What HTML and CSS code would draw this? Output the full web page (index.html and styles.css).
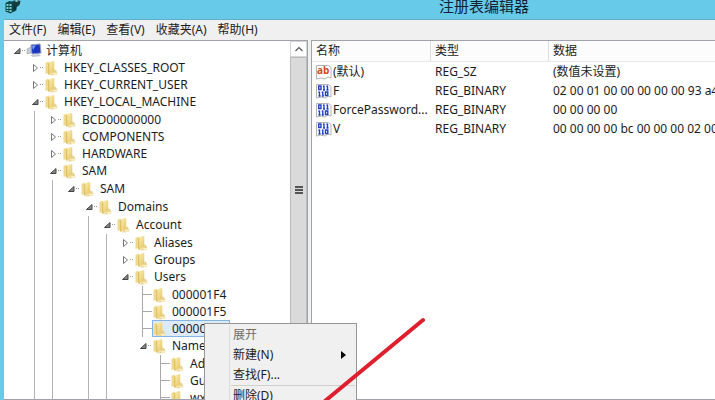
FILE: index.html
```html
<!DOCTYPE html>
<html lang="zh-CN">
<head>
    <meta charset="UTF-8">
    <meta name="viewport" content="width=device-width, initial-scale=1.0">
    <title>注册表编辑器</title>
    <link rel="stylesheet" href="styles.css">
</head>
<body>
    <!-- shared icons -->
    <svg class="sprite" aria-hidden="true">
        <defs>
            <linearGradient id="gold" x1="0" x2="1" y1="0" y2="1">
                <stop offset="0" stop-color="#fdf3bb"/>
                <stop offset="1" stop-color="#e3c15c"/>
            </linearGradient>
        </defs>
        <symbol id="folder" viewBox="0 0 16 16">
            <path d="M1.500 3l3-1.500v11.500l-3 1z" fill="#efd98c"/>
            <path d="M4 2.500l5.500-1.500.8.800v9.700l-5 3.500-1.300-1z" fill="url(#gold)"/>
            <path d="M4 2.500v11.500l1.300 1v-11.500z" fill="#dfc067"/>
            <path d="M10.300 9.500l1.700.5 1.500 3.500-1.500 1.500-6 .5 4.300-4z" fill="#e6d08a"/>
            <path d="M8.500 13.500l4-1 .5 1.500-3 1z" fill="#fff4c8"/>
        </symbol>
        <symbol id="closed" viewBox="0 0 8 10">
            <path d="M2.500 1.500v7l4-3.500z" fill="#fff" stroke="#777"/>
        </symbol>
        <symbol id="open" viewBox="0 0 8 10">
            <path d="M7 2.500v5h-5.500z" fill="#888" stroke="#444"/>
        </symbol>
        <symbol id="binary" viewBox="0 0 16 16">
            <path d="M.5 1.500h12l2.500 2v10.500l-3-1-3 2-4-1-4.500 1z" fill="#fff" stroke="#b5b5b5"/>
            <g fill="none" stroke="#2340c0" stroke-width="1.400">
                <path d="M2.700 3h2.300v3.500h-2.300zM8 2.500v4.500M11.500 2.500v4.500M3.500 8.500v4.500M6.800 8.500v4.500M9.500 9h2.300v3.500h-2.300z"/>
                <path d="M7 3.200h1M10.500 3.200h1M2.500 9.200h1M5.800 9.200h1M2.500 13h2M5.800 13h2M7 7h2M10.500 7h2"/>
            </g>
        </symbol>
        <symbol id="string" viewBox="0 0 16 16">
            <path d="M.5 1.500h12l2.500 2v10.500l-3-1-3 2-4-1-4.500 1z" fill="#fff" stroke="#b5b5b5"/>
            <text x="1" y="10" class="ab">ab</text>
        </symbol>
    </svg>

    <div class="window">
        <header class="titlebar">
            <svg class="app-icon" viewBox="0 0 16 14">
                <path d="M1 3l4-2 5 1v9l-4 2.500-5-2z" fill="#0d4a4e"/>
                <path d="M2 4h2v2h-2zM5 4h2v2h-2zM2 7h2v2h-2zM5 7h2v2h-2zM2 10h2v1h-2zM5 10h2v2h-2z" fill="#7fd0c8"/>
                <path d="M8 1l4-1 4 1-1 4-4 3-3-2z" fill="#123c40"/>
                <path d="M10 1l2-1 2 1-2 1z" fill="#9adad4"/>
                <path d="M9 7l3-1v4l-3 2z" fill="#093538"/>
            </svg>
            <h1>注册表编辑器</h1>
        </header>

        <nav class="menubar">
            <button>文件(F)</button>
            <button>编辑(E)</button>
            <button>查看(V)</button>
            <button>收藏夹(A)</button>
            <button>帮助(H)</button>
        </nav>

        <main class="panes">
            <section class="tree-pane">
                <ul class="tree">
                    <li>
                        <div class="row"><span class="toggle"><svg><use href="#open"/></svg></span>
                            <svg class="icon" viewBox="0 0 16 16">
                                <path d="M1 6l4-2v6l-4 1z" fill="#c9ced6" stroke="#8d949e" stroke-width=".5"/>
                                <path d="M5 2l9-1 1 9-9 1z" fill="#1a35c0" stroke="#8a97c8"/>
                                <path d="M6 3l4-1-3 5z" fill="#7d9cf0"/>
                                <path d="M4 12l9-1 2 2-8 1z" fill="#c3c8d2"/>
                            </svg><span>计算机</span></div>
                        <ul>
                            <li><div class="row"><span class="toggle"><svg><use href="#closed"/></svg></span><svg class="icon"><use href="#folder"/></svg><span>HKEY_CLASSES_ROOT</span></div></li>
                            <li><div class="row"><span class="toggle"><svg><use href="#closed"/></svg></span><svg class="icon"><use href="#folder"/></svg><span>HKEY_CURRENT_USER</span></div></li>
                            <li>
                                <div class="row"><span class="toggle"><svg><use href="#open"/></svg></span><svg class="icon"><use href="#folder"/></svg><span>HKEY_LOCAL_MACHINE</span></div>
                                <ul class="lined">
                                    <li><div class="row"><span class="toggle"><svg><use href="#closed"/></svg></span><svg class="icon"><use href="#folder"/></svg><span>BCD00000000</span></div></li>
                                    <li><div class="row"><span class="toggle"><svg><use href="#closed"/></svg></span><svg class="icon"><use href="#folder"/></svg><span>COMPONENTS</span></div></li>
                                    <li><div class="row"><span class="toggle"><svg><use href="#closed"/></svg></span><svg class="icon"><use href="#folder"/></svg><span>HARDWARE</span></div></li>
                                    <li>
                                        <div class="row"><span class="toggle"><svg><use href="#open"/></svg></span><svg class="icon"><use href="#folder"/></svg><span>SAM</span></div>
                                        <ul class="lined">
                                            <li>
                                                <div class="row"><span class="toggle"><svg><use href="#open"/></svg></span><svg class="icon"><use href="#folder"/></svg><span>SAM</span></div>
                                                <ul>
                                                    <li>
                                                        <div class="row"><span class="toggle"><svg><use href="#open"/></svg></span><svg class="icon"><use href="#folder"/></svg><span>Domains</span></div>
                                                        <ul class="lined">
                                                            <li>
                                                                <div class="row"><span class="toggle"><svg><use href="#open"/></svg></span><svg class="icon"><use href="#folder"/></svg><span>Account</span></div>
                                                                <ul class="lined">
                                                                    <li><div class="row"><span class="toggle"><svg><use href="#closed"/></svg></span><svg class="icon"><use href="#folder"/></svg><span>Aliases</span></div></li>
                                                                    <li><div class="row"><span class="toggle"><svg><use href="#closed"/></svg></span><svg class="icon"><use href="#folder"/></svg><span>Groups</span></div></li>
                                                                    <li>
                                                                        <div class="row"><span class="toggle"><svg><use href="#open"/></svg></span><svg class="icon"><use href="#folder"/></svg><span>Users</span></div>
                                                                        <ul>
                                                                            <li><div class="row"><span class="leaf"></span><svg class="icon"><use href="#folder"/></svg><span>000001F4</span></div></li>
                                                                            <li><div class="row"><span class="leaf"></span><svg class="icon"><use href="#folder"/></svg><span>000001F5</span></div></li>
                                                                            <li><div class="row"><span class="leaf"></span><span class="selected"><svg class="icon"><use href="#folder"/></svg><span>000003E9</span></span></div></li>
                                                                            <li>
                                                                                <div class="row"><span class="toggle"><svg><use href="#open"/></svg></span><svg class="icon"><use href="#folder"/></svg><span>Names</span></div>
                                                                                <ul>
                                                                                    <li><div class="row"><span class="leaf"></span><svg class="icon"><use href="#folder"/></svg><span>Ad</span></div></li>
                                                                                    <li><div class="row"><span class="leaf"></span><svg class="icon"><use href="#folder"/></svg><span>Gu</span></div></li>
                                                                                    <li><div class="row"><span class="leaf"></span><svg class="icon"><use href="#folder"/></svg><span>wx</span></div></li>
                                                                                </ul>
                                                                            </li>
                                                                        </ul>
                                                                    </li>
                                                                </ul>
                                                            </li>
                                                        </ul>
                                                    </li>
                                                </ul>
                                            </li>
                                        </ul>
                                    </li>
                                </ul>
                            </li>
                        </ul>
                    </li>
                </ul>
                <div class="scrollbar">
                    <button class="scroll-up" aria-label="向上滚动"><svg viewBox="0 0 10 8"><path d="M1.500 6l3.500-3.500 3.500 3.500" fill="none" stroke="#555" stroke-width="1.200"/></svg></button>
                    <div class="thumb"><span class="grip"></span></div>
                </div>
            </section>

            <section class="value-pane">
                <table>
                    <thead>
                        <tr><th class="col-name">名称</th><th class="col-type">类型</th><th>数据</th></tr>
                    </thead>
                    <tbody>
                        <tr><td><div class="value"><svg><use href="#string"/></svg><span>(默认)</span></div></td><td>REG_SZ</td><td>(数值未设置)</td></tr>
                        <tr><td><div class="value"><svg><use href="#binary"/></svg><span>F</span></div></td><td>REG_BINARY</td><td>02 00 01 00 00 00 00 00 93 a4</td></tr>
                        <tr><td><div class="value"><svg><use href="#binary"/></svg><span>ForcePassword...</span></div></td><td>REG_BINARY</td><td>00 00 00 00</td></tr>
                        <tr><td><div class="value"><svg><use href="#binary"/></svg><span>V</span></div></td><td>REG_BINARY</td><td>00 00 00 00 bc 00 00 00 02 00</td></tr>
                    </tbody>
                </table>
            </section>
        </main>
    </div>

    <div class="context-menu">
        <button disabled>展开</button>
        <button>新建(N)<svg viewBox="0 0 5 8"><path d="M0 0l5 4-5 4z"/></svg></button>
        <button>查找(F)...</button>
        <hr>
        <button>删除(D)</button>
    </div>

    <svg class="pointer" viewBox="0 0 104 84">
        <path d="M102 4L4 85" stroke="#df1f2d" stroke-width="4" stroke-linecap="round"/>
    </svg>
</body>
</html>
```
FILE: styles.css
```css
* { box-sizing: border-box; }
body { margin: 0; overflow: hidden; background: #67cae9; color: #1c1c1c; font: 12px/16px "Noto Sans", "Noto Sans CJK SC", sans-serif; }
button { padding: 0; border: none; background: none; color: inherit; font: inherit; }
ul { list-style: none; margin: 0; padding: 0; }
.sprite { position: absolute; width: 0; height: 0; }
.ab { font: bold 10px "Open Sans", sans-serif; fill: #d8441c; }

.window { height: 100vh; display: flex; flex-direction: column; padding-left: 4px; }
.titlebar { display: flex; flex: none; justify-content: space-between; height: 20px; padding-right: 186px; border-bottom: 1px solid #62aec6; }
.app-icon { width: 17px; height: 14px; }
.titlebar h1 { margin: 0; font-size: 15px; font-weight: 400; line-height: 12px; color: #123; }

.menubar { display: flex; flex: none; gap: 11px; height: 20px; padding-left: 5px; background: #f0f0f0; }

.panes { flex: 1; min-height: 0; display: flex; gap: 3px; background: #f0f0f0; }
.tree-pane { flex: none; width: 304px; display: flex; border: 1px solid #a0a4aa; border-left: none; background: #fff; }
.tree { flex: 1; min-width: 0; overflow: hidden; padding: 1px 0 0 4px; }
.tree ul { margin-left: 8px; padding-left: 9px; border-left: 1px solid transparent; }
.tree ul ul { margin-top: 1px; }
.tree ul.lined { border-left-color: #b4b4b4; }
.row { display: flex; align-items: center; height: 17px; white-space: nowrap; }
.toggle, .leaf { flex: none; width: 18px; height: 17px; }
.toggle { display: flex; align-items: center; padding-left: 5px; }
.toggle svg { width: 8px; height: 10px; }
.toggle::after { content: ""; width: 3px; margin-left: 1px; border-top: 1px dotted #999; }
.leaf { background: linear-gradient(#aaa, #aaa) 8px 0 / 1px 100% no-repeat, linear-gradient(#aaa, #aaa) 8px 8px / 10px 1px no-repeat; }
.icon { flex: none; width: 16px; height: 16px; margin-right: 4px; }
.selected { display: flex; align-items: center; height: 17px; padding-right: 3px; background: #dcebfb; outline: 1px solid #84b4e4; outline-offset: -1px; }

.scrollbar { width: 17px; display: flex; flex-direction: column; background: #f0f0f0; }
.scroll-up { height: 17px; border: 1px solid #d4d4d4; background: #fff; }
.scroll-up svg { display: block; width: 10px; height: 8px; margin: auto; }
.thumb { display: flex; justify-content: center; height: 100%; padding-top: 128px; border: 1px solid #bbb; background: #dadada; }
.grip { width: 8px; height: 8px; background: repeating-linear-gradient(#555 0 2px, transparent 2px 3px); }

.value-pane { flex: 1; min-width: 0; overflow: hidden; border: 1px solid #a0a4aa; border-right: none; background: #fff; }
table { width: 100%; table-layout: fixed; border-collapse: separate; border-spacing: 0; }
th { height: 21px; padding: 0 4px; border-right: 1px solid #dedede; border-bottom: 1px solid #e8e8e8; background: #fcfcfc; font-weight: 400; text-align: left; }
th:last-child { border-right: none; }
td { height: 19px; padding: 0 0 0 4px; white-space: nowrap; }
.col-name { width: 119px; }
.col-type { width: 118px; }
.value { display: flex; align-items: center; gap: 1px; }
.value svg { flex: none; width: 16px; height: 16px; }

.context-menu { position: absolute; left: 204px; top: 323px; width: 153px; padding: 1px; border: 1px solid #979797; background: linear-gradient(#dcdcdc, #dcdcdc) 24px 2px / 1px 100% no-repeat #f0f0f0; }
.context-menu button { display: flex; align-items: center; justify-content: space-between; width: 100%; height: 20px; padding: 0 9px 0 27px; }
.context-menu button:disabled { color: #6d6d6d; }
.context-menu svg { width: 5px; height: 8px; }
.context-menu hr { height: 1px; margin: 0 0 0 25px; border: none; background: #d0d0d0; }

.pointer { position: absolute; left: 321px; top: 316px; width: 104px; height: 84px; }
```
